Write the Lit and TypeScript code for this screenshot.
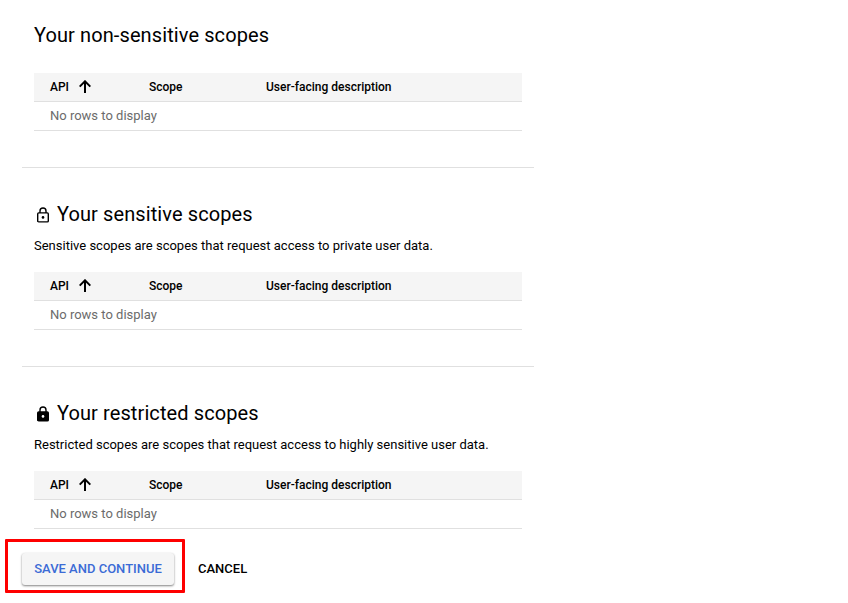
import { LitElement, html, css, svg, nothing } from "lit";
import { customElement, property } from "lit/decorators.js";

@customElement("scope-table")
class ScopeTable extends LitElement {
  static styles = css`
    :host { display: block; font-size: 12px; color: #000; }
    .row { display: grid; grid-template-columns: 99px 117px 1fr; align-items: center; height: 28px; padding-left: 16px; border-bottom: 1px solid #e0e0e0; }
    .head { background: #f5f5f5; font-weight: 500; }
    .api { display: flex; align-items: center; gap: 10px; height: 16px; }
    .arrow { display: block; width: 12px; height: 13px; margin-bottom: 1px; }
    .empty { grid-column: 1 / -1; padding-bottom: 2px; font-size: 13px; color: #6b6b6b; }
  `;
  render() {
    return html`
      <div class="row head">
        <span class="api">API
          <svg class="arrow" viewBox="0 0 12 13" fill="none" stroke="#000" stroke-width="2">
            <path d="M6 13V1.5M0.7 6.6L6 1.3L11.3 6.6" />
          </svg>
        </span>
        <span>Scope</span>
        <span>User-facing description</span>
      </div>
      <div class="row"><span class="empty">No rows to display</span></div>
    `;
  }
}

@customElement("scope-section")
class ScopeSection extends LitElement {
  @property() heading = "";
  @property() description = "";
  @property() lock = "";

  static styles = css`
    :host { display: block; padding: 34px 12px 36px; border-bottom: 1px solid #e0e0e0; }
    .title { display: flex; align-items: center; margin: 0; height: 24px; font-size: 20px; line-height: 24px; font-weight: 400; letter-spacing: 0.1px; }
    .lock { width: 14px; height: 18px; margin: 2px 7px 0 2px; }
    .description { margin: 10px 0 16px; height: 20px; font-size: 13px; line-height: 20px; }
    .spacer { height: 26px; }
  `;
  render() {
    const filled = this.lock === "filled";
    const icon = svg`
      <rect x="1.7" y="6.9" width="10.6" height="9" rx="1" fill=${filled ? "#000" : "none"} stroke="#000" stroke-width="1.4" />
      <path d="M4 6.9V5a3 3 0 0 1 6 0v1.9" fill="none" stroke="#000" stroke-width="1.4" />
      <circle cx="7" cy="11.4" r="1.3" fill=${filled ? "#fff" : "#000"} />`;
    return html`
      <h2 class="title">
        ${this.lock ? html`<svg class="lock" viewBox="0 0 14 18">${icon}</svg>` : nothing}
        <span>${this.heading}</span>
      </h2>
      ${this.description ? html`<p class="description">${this.description}</p>` : html`<div class="spacer"></div>`}
      <scope-table></scope-table>
    `;
  }
}

@customElement("app-root")
class AppRoot extends LitElement {
  static styles = css`
    :host { display: block; box-sizing: border-box; height: 603px; overflow: hidden; background: #fff; color: #000; font-family: Roboto, "Noto Sans", sans-serif; }
    .scopes { width: 512px; margin-left: 22px; }
    .first { padding-top: 23px; }
    .last { padding-bottom: 0; border-bottom: 0; }
    .actions { display: flex; align-items: center; margin: 10px 0 0 5px; }
    .highlight { box-sizing: border-box; width: 180px; height: 54px; padding: 11px 0 0 14px; border: 3px solid #fe0000; border-radius: 1px; }
    button { font: 500 13px/16px Roboto, sans-serif; padding: 0; border: 0; background: none; color: #000; }
    .save { width: 152px; height: 32px; border-radius: 3px; background: #f5f5f5; color: #3b6bd6; box-shadow: 0 1px 2px rgba(0,0,0,.4), 0 1px 3px rgba(0,0,0,.12); }
    .cancel { margin: 6px 0 0 13px; }
  `;
  render() {
    return html`
      <main>
        <div class="scopes">
          <scope-section class="first" heading="Your non-sensitive scopes"></scope-section>
          <scope-section heading="Your sensitive scopes" lock="outline"
            description="Sensitive scopes are scopes that request access to private user data."></scope-section>
          <scope-section class="last" heading="Your restricted scopes" lock="filled"
            description="Restricted scopes are scopes that request access to highly sensitive user data."></scope-section>
        </div>
        <div class="actions">
          <div class="highlight"><button class="save">SAVE AND CONTINUE</button></div>
          <button class="cancel">CANCEL</button>
        </div>
      </main>
    `;
  }
}
